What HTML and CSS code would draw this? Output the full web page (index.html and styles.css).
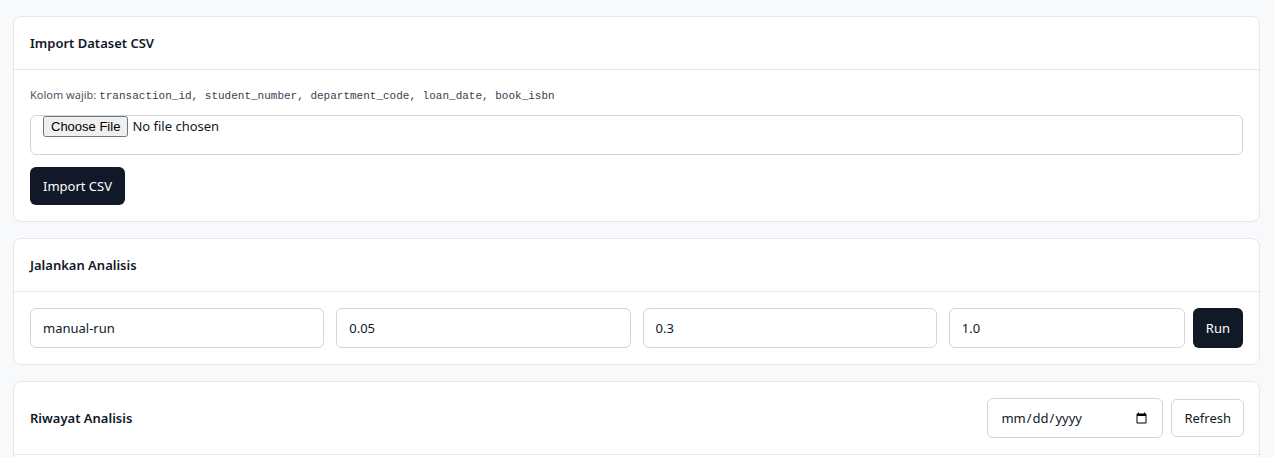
FILE: index.html
```html
<!DOCTYPE html>
<html lang="en">
<head>
    <meta charset="UTF-8">
    <meta name="viewport" content="width=device-width, initial-scale=1.0">
    <title>Analisis Peminjaman</title>
    <link rel="stylesheet" href="styles.css">
</head>
<body>
    <main class="page">
        <!-- Import -->
        <section class="card">
            <div class="card-header">
                <h2>Import Dataset CSV</h2>
            </div>
            <div class="card-body">
                <p class="hint">Kolom wajib: <code>transaction_id, student_number, department_code, loan_date, book_isbn</code></p>
                <input type="file" class="file-input" accept=".csv">
                <button class="btn btn-dark">Import CSV</button>
            </div>
        </section>

        <!-- Run -->
        <section class="card">
            <div class="card-header">
                <h2>Jalankan Analisis</h2>
            </div>
            <div class="card-body">
                <div class="run-grid">
                    <input type="text" class="field" value="manual-run">
                    <input type="text" class="field" value="0.05">
                    <input type="text" class="field" value="0.3">
                    <div class="run-last">
                        <input type="text" class="field" value="1.0">
                        <button class="btn btn-dark">Run</button>
                    </div>
                </div>
            </div>
        </section>

        <!-- History -->
        <section class="card">
            <div class="card-header card-header-tools">
                <h2>Riwayat Analisis</h2>
                <div class="tools">
                    <input type="date" class="field date-field">
                    <button class="btn btn-light">Refresh</button>
                </div>
            </div>
            <div class="card-body history-body"></div>
        </section>
    </main>
</body>
</html>
```

FILE: styles.css
```css
/* General */
* {
    box-sizing: border-box;
}

body {
    margin: 0;
    background-color: #f8f9fb;
    font-family: "Noto Sans", "Open Sans", sans-serif;
    color: #111827;
    font-size: 14px;
}

.page {
    padding: 16px 15px 16px 13px;
    display: flex;
    flex-direction: column;
    gap: 16px;
}

/* Cards */
.card {
    background: #fff;
    border: 1px solid #e5e7eb;
    border-radius: 8px;
}

.card-header {
    padding: 16px;
    border-bottom: 1px solid #e5e7eb;
}

.card-header h2 {
    margin: 0;
    font-size: 13px;
    font-weight: 600;
    line-height: 20px;
}

.card-header-tools {
    display: flex;
    align-items: center;
    justify-content: space-between;
    padding: 16px 15px 16px 16px;
}

.tools {
    display: flex;
    gap: 8px;
    align-items: center;
}

.card-body {
    padding: 16px;
}

.history-body {
    min-height: 120px;
}

.hint {
    margin: 0 0 10px;
    font-size: 11px;
    line-height: 18px;
    color: #4b5563;
}

code {
    font-family: "Liberation Mono", monospace;
    font-size: 11px;
    color: #374151;
}

/* Form controls */
.field {
    height: 40px;
    padding: 0 12px;
    border: 1px solid #d1d5db;
    border-radius: 6px;
    font: inherit;
    font-size: 13px;
    color: #111827;
    background: #fff;
    width: 100%;
    min-width: 0;
}

.file-input {
    display: block;
    width: 100%;
    height: 40px;
    padding: 0 12px;
    border: 1px solid #d1d5db;
    border-radius: 6px;
    font-family: inherit;
    font-size: 13px;
    color: #111827;
    margin-bottom: 12px;
}

.run-grid {
    display: grid;
    grid-template-columns: repeat(4, 1fr);
    gap: 12px;
}

.run-last {
    display: flex;
    gap: 8px;
}

.date-field {
    width: 176px;
}

/* Buttons */
.btn {
    height: 38px;
    padding: 0 13px;
    border-radius: 6px;
    font-family: inherit;
    font-size: 13px;
    cursor: pointer;
}

.btn-dark {
    background-color: #111827;
    border: none;
    color: #fff;
}

.run-last .btn-dark {
    height: 40px;
    flex: none;
}

.btn-light {
    padding: 0 12px;
    background: #fff;
    border: 1px solid #d1d5db;
    color: #111827;
}
```
